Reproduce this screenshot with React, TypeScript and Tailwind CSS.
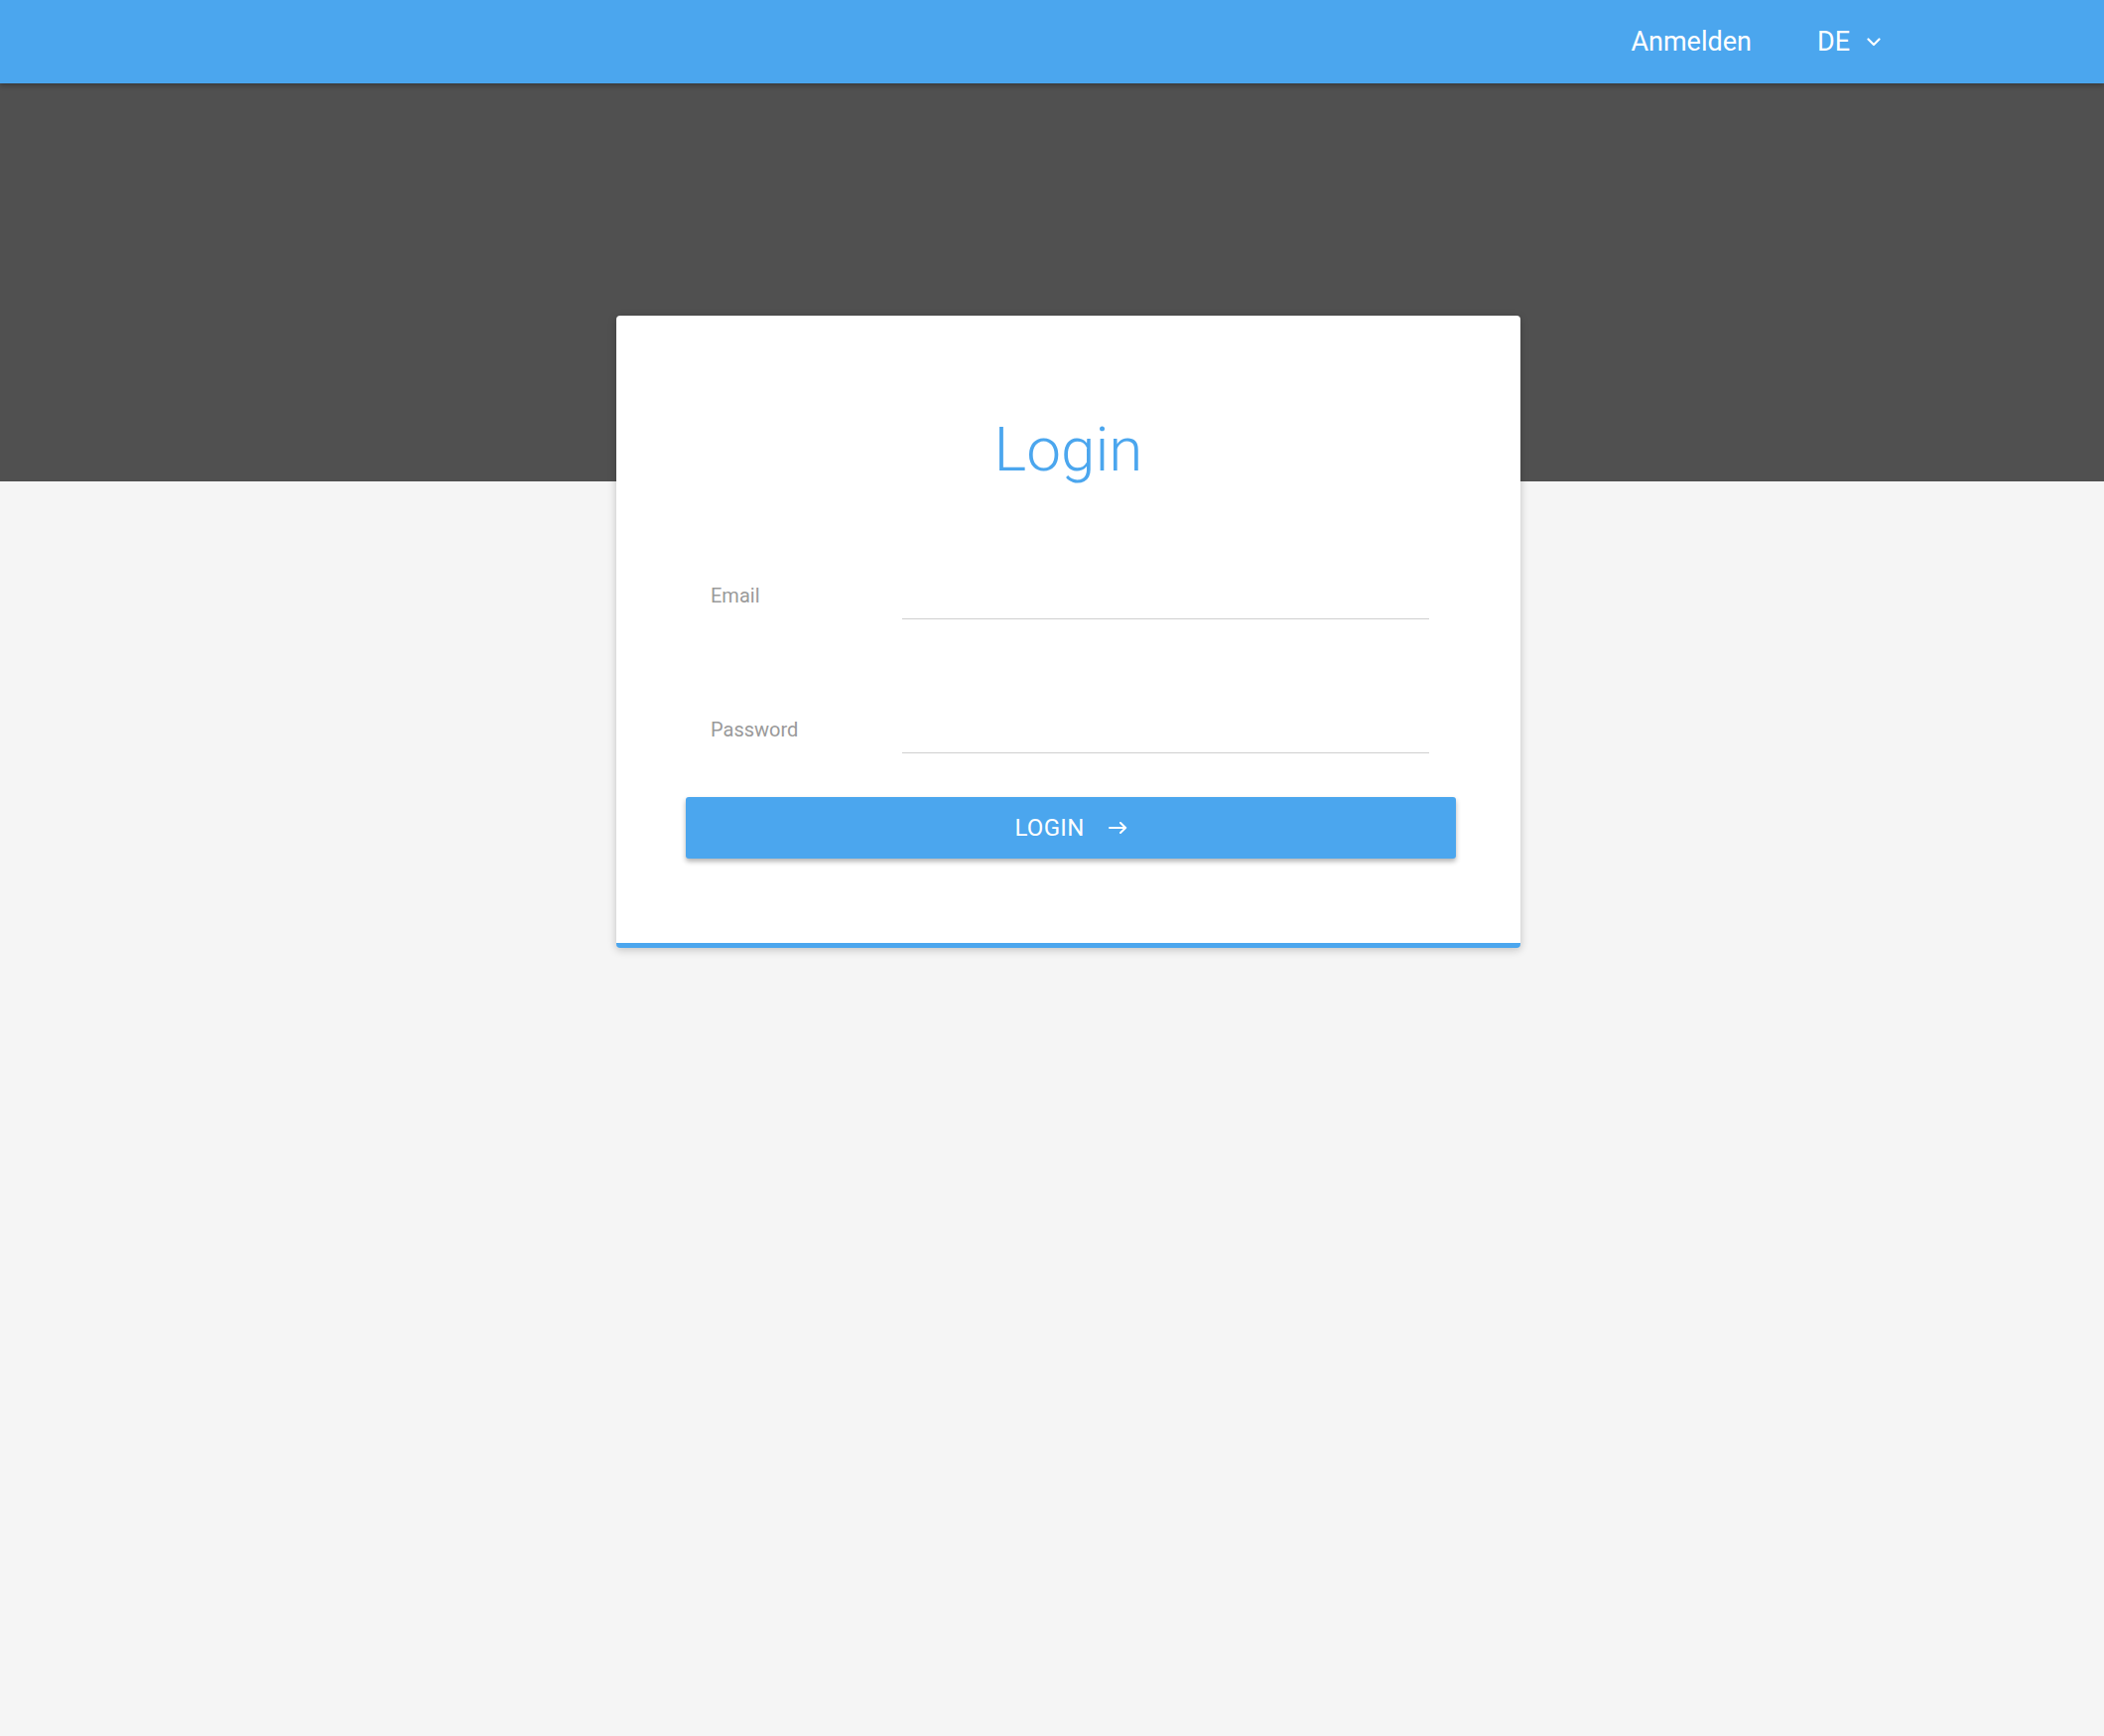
import React from "react";

export default function App() {
  return (
    <div className="min-h-screen bg-[#f5f5f5] font-['Roboto',sans-serif]">
      <header className="relative z-10 flex h-[84px] items-center justify-end bg-[#4ba6ee] pr-[225px] text-white shadow-[0_2px_5px_rgba(0,0,0,0.3)]">
        <span className="text-[27px] leading-[32px]">Anmelden</span>
        <div className="ml-[66px] flex items-center">
          <span className="text-[27px] leading-[32px]">DE</span>
          <svg className="ml-[17px]" width="14" height="9" viewBox="0 0 14 9" fill="none">
            <path d="M1.5 1.5 L7 7 L12.5 1.5" stroke="white" strokeWidth="2.2" strokeLinecap="round" strokeLinejoin="round" />
          </svg>
        </div>
      </header>

      <div className="h-[401px] bg-[#505050]" />

      <div className="-mt-[167px] flex justify-center pl-[33px]">
        <div className="relative w-[911px] overflow-hidden rounded-[4px] border-b-[5px] border-[#4ba6ee] bg-white shadow-[0_2px_8px_rgba(0,0,0,0.22)]">
          <div className="pt-[99px] pb-[85px]">
            <h1 className="text-center text-[62px] font-light leading-[72px] text-[#4ba6ee]">Login</h1>

            <div className="ml-[70px] mr-[65px] mt-[79px]">
              <div className="flex items-end pl-[25px] pr-[27px]">
                <label className="mb-[12px] w-[193px] shrink-0 text-[20px] leading-[24px] text-[#9a9a9a]">Email</label>
                <div className="h-[56px] flex-1 border-b border-[#cfcfcf]" />
              </div>

              <div className="mt-[79px] flex items-end pl-[25px] pr-[27px]">
                <label className="mb-[12px] w-[193px] shrink-0 text-[20px] leading-[24px] text-[#9a9a9a]">Password</label>
                <div className="h-[56px] flex-1 border-b border-[#cfcfcf]" />
              </div>

              <button className="mt-[44px] flex h-[62px] w-full items-center justify-center rounded-[3px] bg-[#4ba6ee] text-white shadow-[0_3px_5px_rgba(0,0,0,0.3)]">
                <span className="text-[24px] leading-[28px] tracking-[0.3px]">LOGIN</span>
                <svg className="ml-[24px]" width="19" height="12" viewBox="0 0 19 12" fill="none">
                  <path d="M1 6 H17.2 M12 1 L17.2 6 L12 11" stroke="white" strokeWidth="2" strokeLinecap="round" strokeLinejoin="round" />
                </svg>
              </button>
            </div>
          </div>
        </div>
      </div>
    </div>
  );
}
